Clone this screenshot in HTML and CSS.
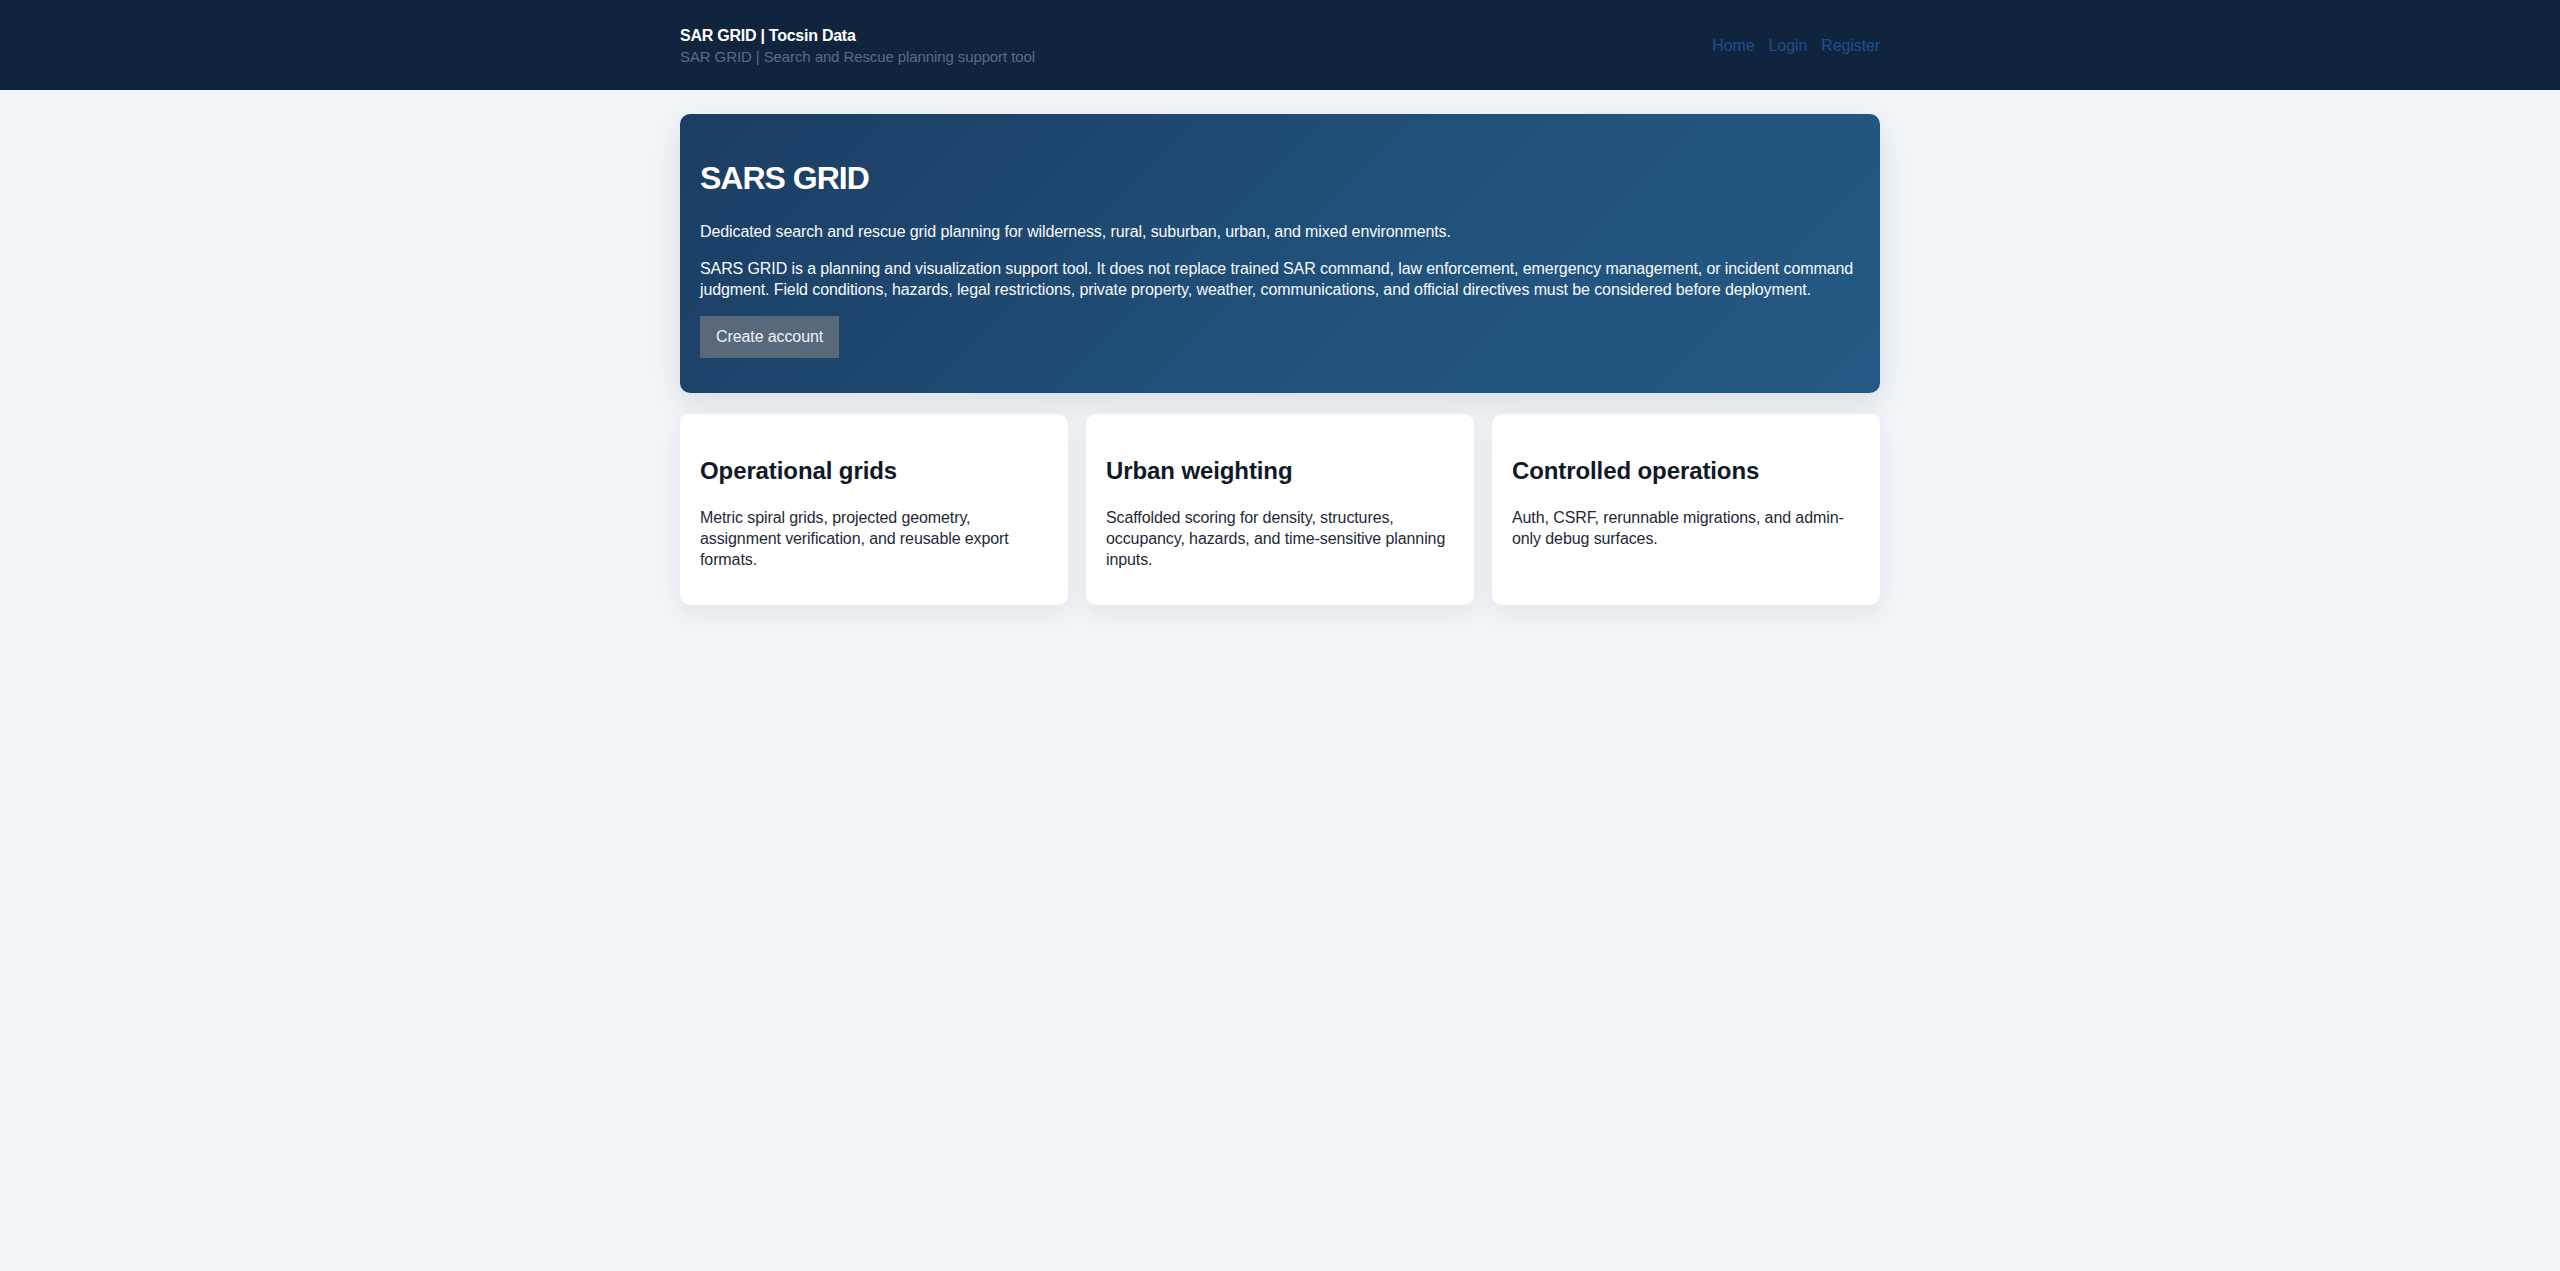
FILE: index.html
```html
<!DOCTYPE html>
<html lang="en">
<head>
<meta charset="utf-8">
<title>SAR GRID | Tocsin Data</title>
<link rel="stylesheet" href="styles.css">
</head>
<body>
<header class="site-header">
  <div class="container header-inner">
    <div class="brand">
      <strong class="brand-title">SAR GRID | Tocsin Data</strong>
      <span class="brand-sub">SAR GRID | Search and Rescue planning support tool</span>
    </div>
    <nav class="nav">
      <a href="#">Home</a>
      <a href="#">Login</a>
      <a href="#">Register</a>
    </nav>
  </div>
</header>
<main class="container main">
  <section class="hero">
    <h1>SARS GRID</h1>
    <p>Dedicated search and rescue grid planning for wilderness, rural, suburban, urban, and mixed environments.</p>
    <p>SARS GRID is a planning and visualization support tool. It does not replace trained SAR command, law enforcement, emergency management, or incident command judgment. Field conditions, hazards, legal restrictions, private property, weather, communications, and official directives must be considered before deployment.</p>
    <p><a class="button" href="#">Create account</a></p>
  </section>
  <section class="cards">
    <article class="card">
      <h2>Operational grids</h2>
      <p>Metric spiral grids, projected geometry, assignment verification, and reusable export formats.</p>
    </article>
    <article class="card">
      <h2>Urban weighting</h2>
      <p>Scaffolded scoring for density, structures, occupancy, hazards, and time-sensitive planning inputs.</p>
    </article>
    <article class="card">
      <h2>Controlled operations</h2>
      <p>Auth, CSRF, rerunnable migrations, and admin-only debug surfaces.</p>
    </article>
  </section>
</main>
</body>
</html>
```
FILE: styles.css
```css
* { box-sizing: border-box; }

html, body {
  margin: 0;
  padding: 0;
}

body {
  font-family: "Liberation Sans", Arial, sans-serif;
  font-size: 16px;
  line-height: 1.33;
  letter-spacing: -0.1px;
  background: #f1f5f9;
  color: #0f172a;
  min-height: 100vh;
}

.container {
  max-width: 1200px;
  margin: 0 auto;
}

.site-header {
  background: #11243d;
  color: #ffffff;
}

.header-inner {
  display: flex;
  justify-content: space-between;
  align-items: center;
  padding: 25px 0 23px;
}

.brand {
  display: flex;
  flex-direction: column;
}

.brand-title {
  font-size: 16px;
  line-height: 21px;
  font-weight: 700;
  letter-spacing: -0.25px;
  color: #ffffff;
}

.brand-sub {
  font-size: 15px;
  line-height: 21px;
  color: #5b6b80;
}

.nav {
  display: flex;
  gap: 14px;
}

.nav a {
  color: #1f4f8c;
  text-decoration: none;
  font-size: 16px;
}

.main {
  padding-top: 24px;
}

.hero {
  background: linear-gradient(135deg, #1b3d63 0%, #21527c 60%, #245a85 100%);
  color: #ffffff;
  border-radius: 10px;
  padding: 21px 20px 19px;
  margin-bottom: 21px;
  box-shadow: 0 10px 30px rgba(15, 23, 42, 0.10);
}

.hero h1 {
  font-size: 32px;
  margin: 22px 0 21px;
  font-weight: 700;
  letter-spacing: -1px;
}

.hero p {
  margin: 16px 0;
  color: #f8fafc;
}

.button {
  display: inline-block;
  background: #59697c;
  color: #eef2f6;
  text-decoration: none;
  padding: 10px 16px;
  font-size: 16px;
}

.cards {
  display: grid;
  grid-template-columns: repeat(3, 1fr);
  gap: 18px;
}

.card {
  background: #ffffff;
  border-radius: 10px;
  padding: 21px 20px 19px;
  box-shadow: 0 8px 24px rgba(15, 23, 42, 0.07);
}

.card h2 {
  font-size: 24px;
  margin: 20px 0;
  color: #111827;
  font-weight: 700;
}

.card p {
  margin: 16px 0;
  color: #1f2937;
}
```
